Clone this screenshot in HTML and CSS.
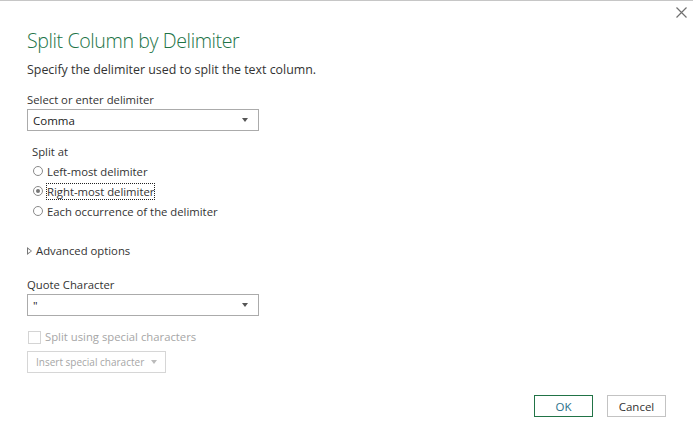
FILE: index.html
```html
<!DOCTYPE html>
<html>
<head>
<meta charset="utf-8">
<link rel="stylesheet" href="styles.css">
</head>
<body>
<div class="dialog">
  <button class="close" aria-label="Close">
    <svg width="11" height="11" viewBox="0 0 11 11"><path d="M0.5 0.5 L10.5 10.5 M10.5 0.5 L0.5 10.5" stroke="#707070" stroke-width="1.2" fill="none"/></svg>
  </button>
  <h1 class="title">Split Column by Delimiter</h1>
  <p class="subtitle">Specify the delimiter used to split the text column.</p>

  <div class="field">
    <label class="label">Select or enter delimiter</label>
    <div class="select"><span>Comma</span><span class="caret"></span></div>
  </div>

  <div class="group">
    <div class="group-label">Split at</div>
    <label class="radio"><span class="dot"></span><span class="rtext">Left-most delimiter</span></label>
    <label class="radio"><span class="dot checked"></span><span class="rtext focus">Right-most delimiter</span></label>
    <label class="radio"><span class="dot"></span><span class="rtext">Each occurrence of the delimiter</span></label>
  </div>

  <div class="advanced"><span class="tri"></span>Advanced options</div>

  <div class="field quote">
    <label class="label">Quote Character</label>
    <div class="select"><span>"</span><span class="caret"></span></div>
  </div>

  <label class="check"><span class="box"></span>Split using special characters</label>
  <div class="insert-row"><div class="insert">Insert special character<span class="caret light"></span></div></div>

  <div class="actions">
    <button class="btn ok">OK</button>
    <button class="btn cancel">Cancel</button>
  </div>
</div>
</body>
</html>
```

FILE: styles.css
```css
* { box-sizing: border-box; }
html, body { margin: 0; padding: 0; background: #fff; }
body { font-family: "Open Sans", "Noto Sans", sans-serif; color: #333; font-size: 11.3px; }
.dialog {
  position: relative;
  height: 444px;
  border-top: 1px solid #c6c6c6;
  padding: 0 27px 0 27px;
  display: flex; flex-direction: column; align-items: flex-start;
}
.close {
  position: absolute; right: 6px; top: 6px;
  border: 0; background: none; padding: 0; width: 11px; height: 11px;
}
.close svg { display: block; }
.title {
  margin: 0; padding-top: 26px;
  font-weight: 300; font-size: 19.6px; line-height: 28px;
  color: #217346; letter-spacing: -0.4px;
}
.subtitle { margin: 6px 0 0; font-size: 12.4px; line-height: 18px; color: #333; }
.field { margin-top: 13px; }
.label { display: block; font-size: 11.3px; line-height: 16px; color: #333; }
.select {
  margin-top: 1px;
  width: 232px; height: 22px;
  border: 1px solid #ababab;
  display: flex; align-items: center; justify-content: space-between;
  padding: 0 10px 0 5px;
  font-size: 11.5px; color: #222;
}
.caret {
  width: 0; height: 0;
  border-left: 3.5px solid transparent; border-right: 3.5px solid transparent;
  border-top: 4px solid #555;
}
.caret.light { border-top-color: #bbb; margin-left: 7px; }
.group { margin-top: 12px; padding-left: 5px; }
.group-label { font-size: 11.3px; line-height: 18px; }
.radio { display: flex; align-items: center; height: 20px; }
.dot {
  width: 10px; height: 10px; border-radius: 50%;
  border: 1px solid #8a8a8a; background: #fff; margin-right: 3px; margin-left: 1px;
  position: relative; flex: none;
}
.dot.checked::after {
  content: ""; position: absolute; left: 2px; top: 2px;
  width: 4px; height: 4px; border-radius: 50%; background: #777;
}
.rtext { font-size: 11.3px; line-height: 15px; padding: 0; border: 1px dotted transparent; }
.rtext.focus { border-color: #222; }
.advanced {
  margin-top: 21px; display: flex; align-items: center;
  font-size: 11.3px; line-height: 18px;
}
.tri {
  width: 0; height: 0; margin-right: 4px;
  border-top: 4px solid transparent; border-bottom: 4px solid transparent;
  border-left: 5px solid #777; position: relative;
}
.tri::after {
  content: ""; position: absolute; left: -4px; top: -2.5px;
  border-top: 2.5px solid transparent; border-bottom: 2.5px solid transparent;
  border-left: 3px solid #fff;
}
.quote { margin-top: 17px; }
.check {
  margin-top: 13px; display: flex; align-items: center;
  font-size: 11.3px; color: #a6a6a6; line-height: 16px;
}
.box { width: 13px; height: 13px; border: 1px solid #d4d4d4; margin: 0 4px 0 1px; }
.insert-row { margin-top: 6px; }
.insert {
  display: inline-flex; align-items: center;
  height: 22px; padding: 0 8px;
  border: 1px solid #d6d6d6; color: #a6a6a6; font-size: 10px;
}
.actions {
  align-self: flex-end;
  margin-top: auto; margin-bottom: 27px;
  display: flex; gap: 14px;
}
.btn {
  width: 59px; height: 22px; background: #fff;
  font-family: inherit; font-size: 11.5px; color: #333; padding: 0;
}
.btn.ok { border: 1px solid #217346; color: #2a6f8a; }
.btn.cancel { border: 1px solid #c3c3c3; }
```
